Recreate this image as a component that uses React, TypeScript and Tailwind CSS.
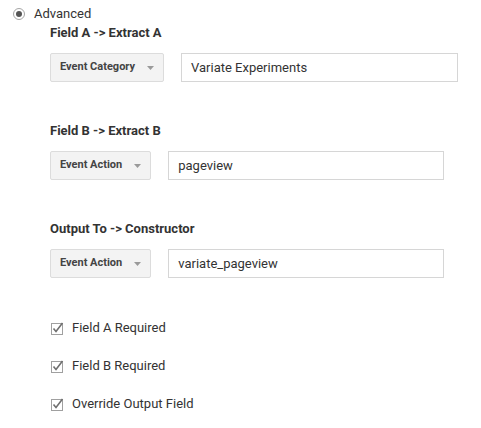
import React from 'react';

const roboto = { fontFamily: 'Roboto, "Liberation Sans", sans-serif' };

function Caret() {
  return (
    <svg width="7" height="4" viewBox="0 0 7 4" className="shrink-0">
      <path d="M0 0 L7 0 L3.5 4 Z" fill="#9a9a9a" />
    </svg>
  );
}

function Dropdown({ label }: { label: string }) {
  return (
    <div className="inline-flex h-[29px] items-center gap-[12px] rounded-[2px] border border-[#dcdcdc] bg-[#f3f3f3] pl-[9px] pr-[9px]">
      <span className="text-[11px] font-bold text-[#444]">{label}</span>
      <Caret />
    </div>
  );
}

function TextInput({ value, width }: { value: string; width: string }) {
  return (
    <div className={`flex h-[29px] items-center border border-[#d6d6d6] bg-white pl-[9px] ${width}`}>
      <span className="text-[13px] text-[#333]">{value}</span>
    </div>
  );
}

function Section({ title, dropdown, value, inputWidth, top }: { title: string; dropdown: string; value: string; inputWidth: string; top: string }) {
  return (
    <div className={top}>
      <div className="h-[16px] text-[13px] font-bold leading-[16px] text-[#333]">{title}</div>
      <div className="mt-[12px] flex items-center gap-[17px]">
        <Dropdown label={dropdown} />
        <TextInput value={value} width={inputWidth} />
      </div>
    </div>
  );
}

function Check({ label, top }: { label: string; top: string }) {
  return (
    <div className={`flex h-[20px] items-center gap-[8px] ${top}`}>
      <svg width="14" height="14" viewBox="0 0 14 14" className="shrink-0">
        <rect x="1.5" y="2.5" width="11" height="11" fill="white" stroke="#a0a0a0" />
        <path d="M3.5 7.5 L6 10.5 L12.5 2" fill="none" stroke="#6f6f6f" strokeWidth="1.6" />
      </svg>
      <span className="text-[13px] text-[#333]">{label}</span>
    </div>
  );
}

export default function App() {
  return (
    <div className="h-[428px] w-[481px] bg-white pt-[6px]" style={roboto}>
      {/* Radio */}
      <div className="flex h-[16px] items-center gap-[9px] pl-[13px]">
        <div className="flex h-[12px] w-[12px] items-center justify-center rounded-full border border-[#a5a5a5] bg-white">
          <div className="h-[6px] w-[6px] rounded-full bg-[#555]" />
        </div>
        <span className="text-[13px] text-[#333]">Advanced</span>
      </div>

      <div className="pl-[50px]">
        <Section top="mt-[3px]" title="Field A -> Extract A" dropdown="Event Category" value="Variate Experiments" inputWidth="w-[277px]" />
        <Section top="mt-[41px]" title="Field B -> Extract B" dropdown="Event Action" value="pageview" inputWidth="w-[276px]" />
        <Section top="mt-[41px]" title="Output To -> Constructor" dropdown="Event Action" value="variate_pageview" inputWidth="w-[276px]" />

        <Check top="mt-[40px]" label="Field A Required" />
        <Check top="mt-[18px]" label="Field B Required" />
        <Check top="mt-[18px]" label="Override Output Field" />
      </div>
    </div>
  );
}
